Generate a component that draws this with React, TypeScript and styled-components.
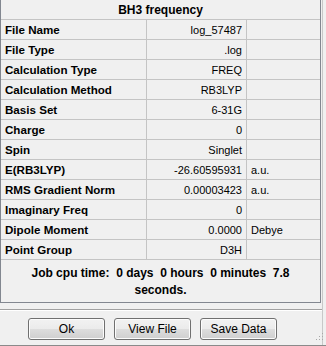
import React from "react";
import styled, { createGlobalStyle } from "styled-components";

const Global = createGlobalStyle`
  html, body { margin: 0; padding: 0; background: #f0f0f0; }
  body { font-family: "Liberation Sans", Arial, sans-serif; color: #000; }
`;

const Window = styled.div`
  width: 326px;
  height: 346px;
  box-sizing: border-box;
  display: flex;
  flex-direction: column;
  background: #f0f0f0;
  position: relative;
  border-bottom: 1px solid #8a8a8a;
`;

const Panel = styled.div`
  width: 321px;
  height: 303px;
  box-sizing: border-box;
  border: 1px solid #828790;
  border-top: none;
  display: flex;
  flex-direction: column;
`;

const Grid = styled.div`
  display: grid;
  grid-template-columns: 146px 100px 1fr;
  grid-auto-rows: 20px;
`;

const Title = styled.div`
  grid-column: 1 / -1;
  box-sizing: border-box;
  border-bottom: 1px solid #c4c4c4;
  display: flex;
  align-items: center;
  justify-content: center;
  font-weight: bold;
  font-size: 12px;
`;

const Cell = styled.div<{ $align?: "left" | "right"; $bold?: boolean; $last?: boolean }>`
  box-sizing: border-box;
  border-bottom: 1px solid #c4c4c4;
  border-right: ${(p) => (p.$last ? "none" : "1px solid #c4c4c4")};
  display: flex;
  align-items: center;
  justify-content: ${(p) => (p.$align === "right" ? "flex-end" : "flex-start")};
  padding: ${(p) => (p.$align === "right" ? "0 4px 0 0" : "0 0 0 4px")};
  font-weight: ${(p) => (p.$bold ? "bold" : "normal")};
  font-size: ${(p) => (p.$bold ? "11.6px" : "11px")};
  white-space: nowrap;
  overflow: hidden;
`;

const JobTime = styled.div`
  flex: 1;
  display: flex;
  align-items: flex-start;
  justify-content: center;
  text-align: center;
  padding-top: 5px;
  font-weight: bold;
  font-size: 12px;
  line-height: 17px;
  white-space: pre;
`;

const Separator = styled.div`
  margin: 6px 4px 0 0;
  height: 0;
  border-top: 1px solid #a0a0a0;
  border-bottom: 1px solid #ffffff;
`;

const ButtonRow = styled.div`
  display: flex;
  gap: 9px;
  padding-left: 28px;
  margin-top: 7px;
`;

const Button = styled.button`
  width: 77px;
  height: 22px;
  box-sizing: border-box;
  border: 1px solid #707070;
  border-radius: 3px;
  background: linear-gradient(#f2f2f2 0%, #ebebeb 50%, #dddddd 51%, #cfcfcf 100%);
  box-shadow: inset 0 0 0 1px #fcfcfc;
  font-family: "Liberation Sans", Arial, sans-serif;
  font-size: 12px;
  color: #000;
  padding: 0;
`;

const Grip = styled.svg`
  position: absolute;
  right: 2px;
  bottom: 2px;
`;

const RightEdge = styled.div`
  position: absolute;
  top: 0;
  bottom: 0;
  right: 3px;
  width: 1px;
  background: #c8c8c8;
`;

const rows: [string, string, string][] = [
  ["File Name", "log_57487", ""],
  ["File Type", ".log", ""],
  ["Calculation Type", "FREQ", ""],
  ["Calculation Method", "RB3LYP", ""],
  ["Basis Set", "6-31G", ""],
  ["Charge", "0", ""],
  ["Spin", "Singlet", ""],
  ["E(RB3LYP)", "-26.60595931", "a.u."],
  ["RMS Gradient Norm", "0.00003423", "a.u."],
  ["Imaginary Freq", "0", ""],
  ["Dipole Moment", "0.0000", "Debye"],
  ["Point Group", "D3H", ""],
];

export default function App() {
  return (
    <>
      <Global />
      <Window>
        <RightEdge />
        <Panel>
          <Grid>
            <Title>BH3 frequency</Title>
            {rows.map(([k, v, u]) => (
              <React.Fragment key={k}>
                <Cell $bold>{k}</Cell>
                <Cell $align="right">{v}</Cell>
                <Cell $last>{u}</Cell>
              </React.Fragment>
            ))}
          </Grid>
          <JobTime>{"Job cpu time:  0 days  0 hours  0 minutes  7.8\nseconds."}</JobTime>
        </Panel>
        <Separator />
        <ButtonRow>
          <Button>Ok</Button>
          <Button>View File</Button>
          <Button>Save Data</Button>
        </ButtonRow>
        <Grip width="10" height="10" viewBox="0 0 10 10">
          <g fill="#a8a8a8">
            <rect x="8" y="0" width="1" height="1" />
            <rect x="5" y="3" width="1" height="1" />
            <rect x="8" y="3" width="1" height="1" />
            <rect x="2" y="6" width="1" height="1" />
            <rect x="5" y="6" width="1" height="1" />
            <rect x="8" y="6" width="1" height="1" />
          </g>
        </Grip>
      </Window>
    </>
  );
}
